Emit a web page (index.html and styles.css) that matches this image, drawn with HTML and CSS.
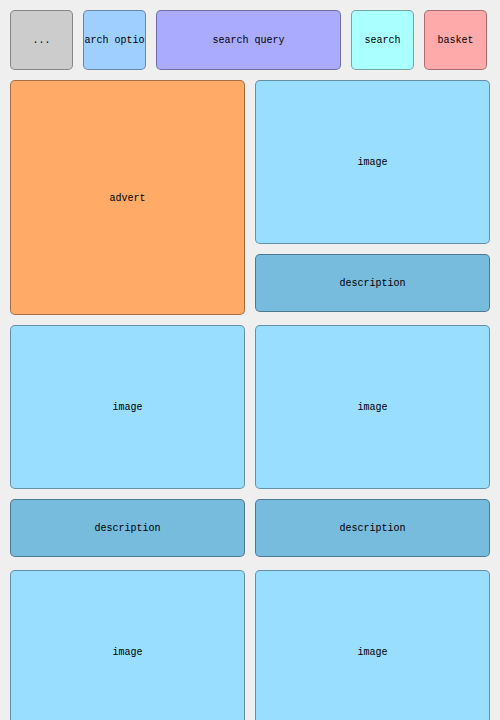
FILE: index.html
```html
<!DOCTYPE html>
<html lang="en">
<head>
<meta charset="utf-8">
<meta name="viewport" content="width=device-width, initial-scale=1">
<title>Shop</title>
<link rel="stylesheet" href="styles.css">
</head>
<body>
<form class="toolbar">
  <button type="button" class="box menu"><span>...</span></button>
  <button type="button" class="box options"><span>search options</span></button>
  <input type="text" class="box query" value="search query" aria-label="search query">
  <button type="button" class="box search"><span>search</span></button>
  <button type="button" class="box basket"><span>basket</span></button>
</form>
<main class="products">
  <aside class="box advert">advert</aside>
  <article class="product">
    <div class="box image">image</div>
    <div class="box description">description</div>
  </article>
  <article class="product">
    <div class="box image">image</div>
    <div class="box description">description</div>
  </article>
  <article class="product">
    <div class="box image">image</div>
    <div class="box description">description</div>
  </article>
  <article class="product">
    <div class="box image">image</div>
    <div class="box description">description</div>
  </article>
  <article class="product">
    <div class="box image">image</div>
    <div class="box description">description</div>
  </article>
</main>
</body>
</html>
```
FILE: styles.css
```css
* {
  box-sizing: border-box;
}

body {
  margin: 0;
  height: 100vh;
  padding: 10px;
  overflow: hidden;
  background: #efefef;
  color: #000;
  font: 10px/12px "Liberation Mono", monospace;
}

.box {
  display: flex;
  align-items: center;
  justify-content: center;
  min-width: 0;
  margin: 0;
  padding: 2px 0 0;
  border: 1px solid rgba(0, 0, 0, 0.35);
  border-radius: 5px;
  overflow: hidden;
  color: inherit;
  font: inherit;
  text-align: center;
  white-space: nowrap;
}

.toolbar {
  display: grid;
  grid-template-columns: 63px 63px 1fr 63px 63px;
  grid-auto-rows: 60px;
  gap: 10px;
  margin: 0 3px 10px 0;
}

.menu { background: #ccc; }
.options { background: #9fcfff; }
.query { background: #aaf; }
.search { background: #aff; }
.basket { background: #faa; }

.products {
  display: grid;
  grid-template-columns: 1fr 1fr;
  gap: 10px;
}

.advert {
  aspect-ratio: 1;
  background: #fa6;
}

.product {
  display: grid;
  grid-template-rows: 164px 58px;
  gap: 10px;
  aspect-ratio: 1;
}

.image { background: #9df; }
.description { background: #7bd; }
```
